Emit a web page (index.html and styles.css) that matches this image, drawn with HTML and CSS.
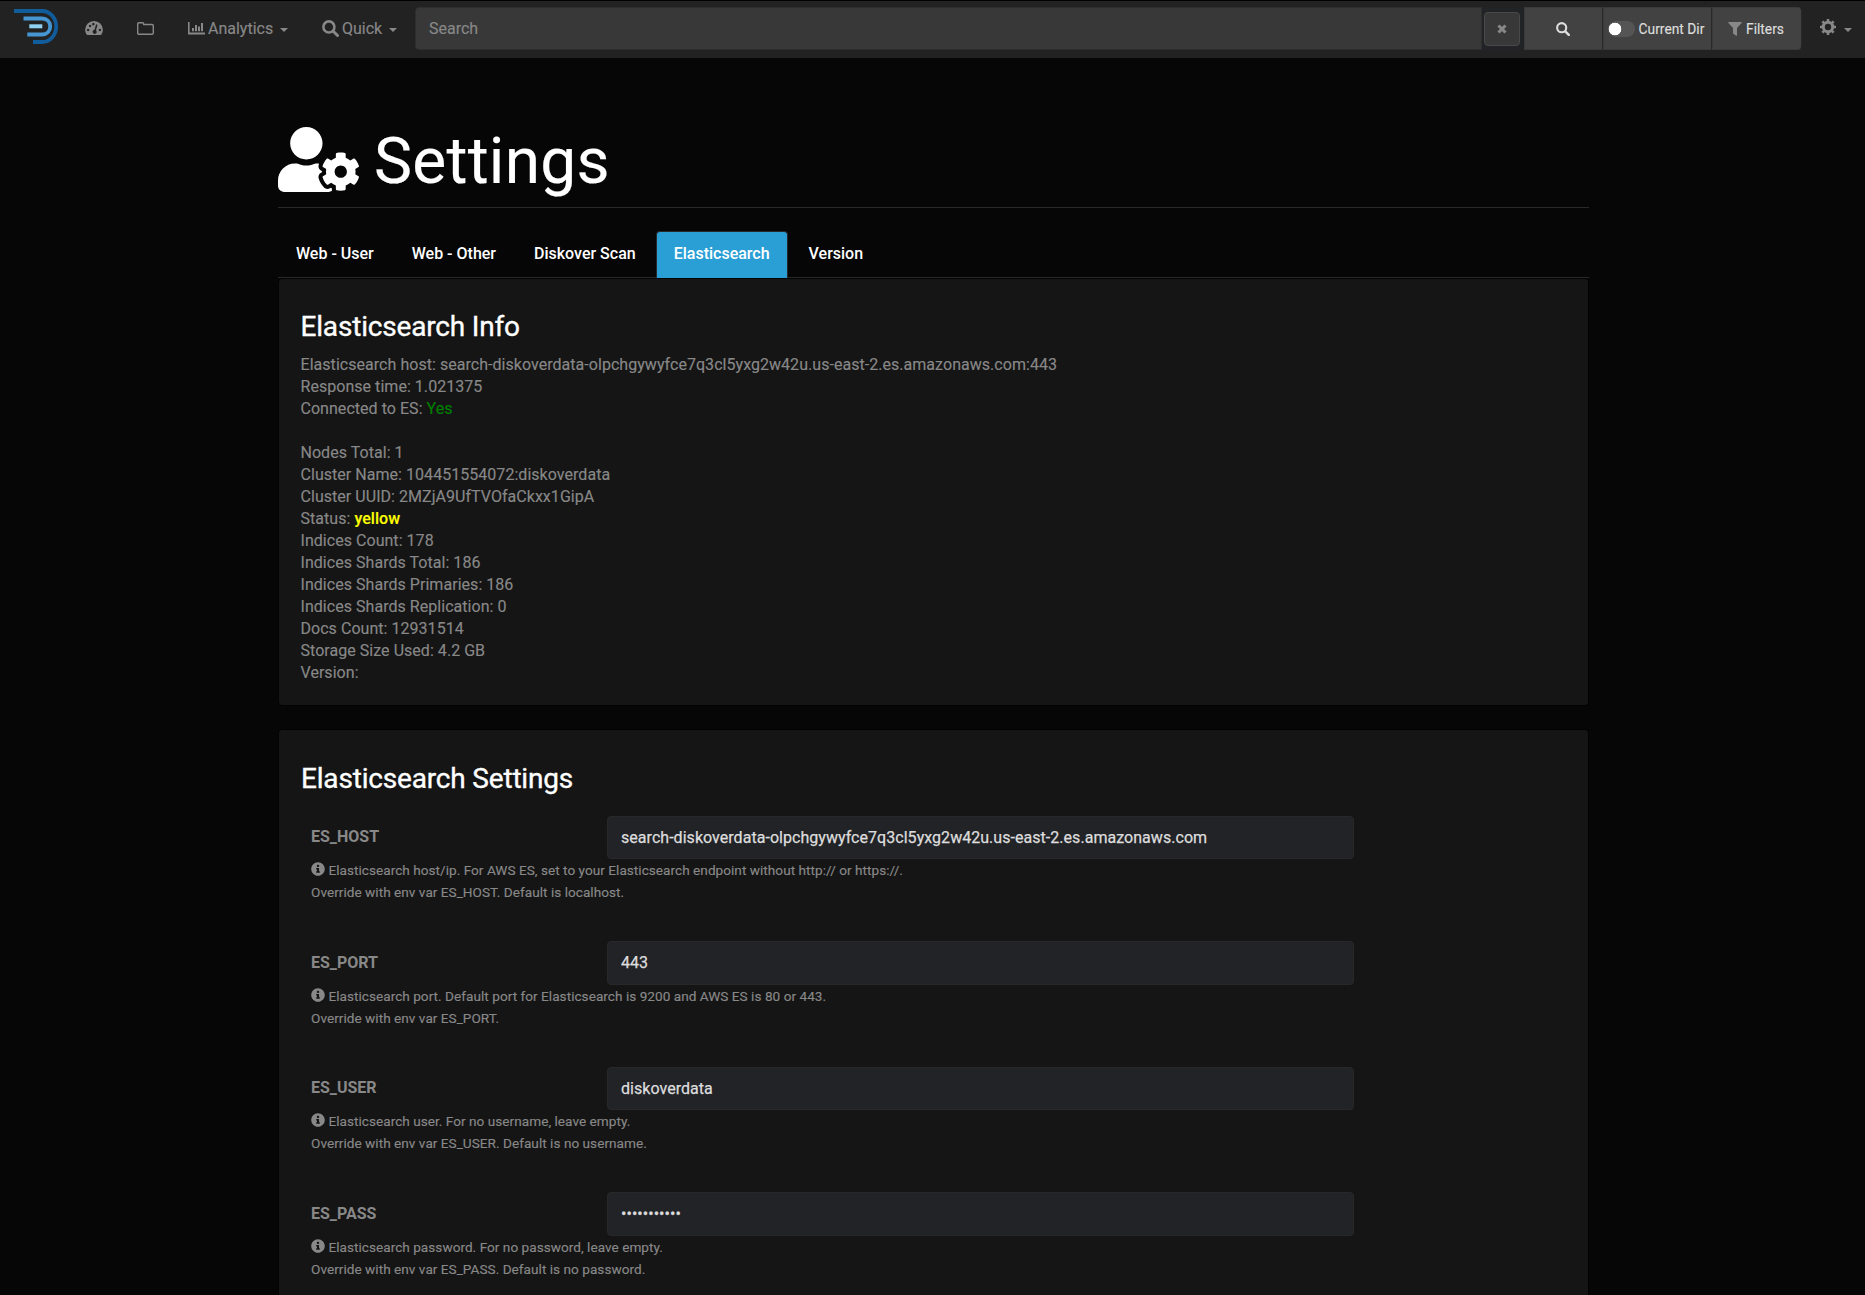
FILE: index.html
```html
<!DOCTYPE html>
<html lang="en">
<head>
<meta charset="utf-8">
<title>Settings</title>
<link rel="stylesheet" href="styles.css">
</head>
<body>
<svg class="defs" aria-hidden="true">
  <symbol id="info" viewBox="0 0 512 512"><path d="M256 8C119 8 8 119 8 256s111 248 248 248 248-111 248-248S393 8 256 8zm0 90c25 0 44 19 44 44s-19 44-44 44-44-19-44-44 19-44 44-44zm66 284c0 7-5 12-12 12H202c-7 0-12-5-12-12v-32c0-7 5-12 12-12h16v-60h-16c-7 0-12-5-12-12v-32c0-7 5-12 12-12h80c7 0 12 5 12 12v104h16c7 0 12 5 12 12z"/></symbol>
  <symbol id="search" viewBox="0 0 16 16"><circle cx="6.5" cy="6.5" r="5.200" fill="none" stroke="currentColor" stroke-width="2.400"/><path d="M10.600 10.600l4 4" stroke="currentColor" stroke-width="2.800" stroke-linecap="round"/></symbol>
</svg>
<nav class="navbar">
  <svg class="logo" viewBox="0 0 46 37" fill="none"><path d="M0 2h28c8 0 14.200 7 14.200 15.500S36 33 28 33h-9" stroke="#115c9b" stroke-width="3.800"/><path d="M9.500 9.500H28c5 0 8.200 3.500 8.200 8s-3.200 8-8.200 8H13.300" stroke="#4596d3" stroke-width="3.800"/><path d="M15.300 17.300h13" stroke="#8fd3f4" stroke-width="4"/></svg>
  <a class="nav-icon dash"><svg width="18" height="14" viewBox="0 0 19 15"><path fill="currentColor" fill-rule="evenodd" d="M1.500 14.500A9 9 0 0 1 0 9.500a9.500 9.500 0 0 1 19 0 9 9 0 0 1-1.500 5q-.3.500-1 .500h-14q-.7 0-1-.500zM3.200 8.300a1.300 1.300 0 1 0 .01 0zM5.300 4a1.300 1.300 0 1 0 .01 0zM15.800 8.300a1.300 1.300 0 1 0 .01 0zM8.800 2a1.300 1.300 0 1 0 .01 0zM11.800 3.500l-1.800 6a2.200 2.200 0 1 0 1.600.5l1.700-5.800z"/></svg></a>
  <a class="nav-icon folder"><svg width="17" height="13" viewBox="0 0 17 13"><path fill="none" stroke="currentColor" stroke-width="1.400" d="M.7 2Q.7.7 2 .7h3.500q1.200 0 1.200 1.300v.5H15q1.300 0 1.300 1.300V11q0 1.300-1.300 1.300H2Q.7 12.300.7 11z"/></svg></a>
  <a class="nav-link analytics"><svg width="17" height="13" viewBox="0 0 17 13"><path fill="currentColor" d="M0 0h1.600v10.600H17v1.800H0zM4 6h2v3.200H4zM7 3h2v6.200H7zM10 4.500h2v4.700h-2zM13 1h2v8.200h-2z"/></svg><span>Analytics</span><i class="caret"></i></a>
  <a class="nav-link quick"><svg width="17" height="17"><use href="#search"/></svg><span>Quick</span><i class="caret"></i></a>
  <div class="searchbar">
    <div class="field">Search</div>
    <div class="clear"><span class="clear-btn"><svg width="10" height="10" viewBox="0 0 10 10"><path d="M1.500 1.500l7 7M8.500 1.500l-7 7" stroke="currentColor" stroke-width="3"/></svg></span></div>
    <div class="cell go"><svg width="14" height="14" viewBox="0 0 16 16"><use href="#search" width="16" height="16"/></svg></div>
    <div class="cell dir"><span class="toggle"></span><span>Current Dir</span></div>
    <div class="cell filters"><svg width="14" height="14" viewBox="0 0 14 14"><path fill="currentColor" d="M.5 0h13q.6.500 0 1.100L9 6v7.300q-.3.900-1.200.2L5 11.500V6L.4 1.100Q0 .5.500 0z"/></svg><span>Filters</span></div>
  </div>
  <a class="nav-link gear"><svg width="16" height="16" viewBox="0 0 16 16" fill="none" stroke="currentColor"><circle cx="8" cy="8" r="4.700" stroke-width="3"/><path stroke-width="2.600" d="M8 0v3.500M8 12.500V16M0 8h3.500M12.500 8H16M2.350 2.350l2.300 2.300M11.350 11.350l2.300 2.300M2.350 13.650l2.300-2.300M11.350 4.650l2.300-2.300"/></svg><i class="caret"></i></a>
</nav>
<main class="container">
  <h1 class="title"><svg width="81" height="65" viewBox="0 0 640 512"><path fill="currentColor" d="M610.5 373.3c2.6-14.1 2.6-28.5 0-42.6l25.8-14.9c3-1.7 4.3-5.2 3.3-8.5-6.7-21.6-18.2-41.2-33.2-57.4-2.3-2.5-6-3.1-9-1.4l-25.8 14.9c-10.9-9.3-23.4-16.5-36.9-21.3v-29.8c0-3.4-2.4-6.4-5.7-7.1-22.3-5-45-4.8-66.2 0-3.3.7-5.7 3.7-5.7 7.1v29.8c-13.5 4.8-26 12-36.9 21.3l-25.8-14.9c-2.9-1.7-6.7-1.1-9 1.4-15 16.2-26.5 35.8-33.2 57.4-1 3.3.4 6.8 3.3 8.5l25.8 14.9c-2.6 14.1-2.6 28.5 0 42.6l-25.8 14.9c-3 1.7-4.3 5.2-3.3 8.5 6.7 21.6 18.2 41.1 33.2 57.4 2.3 2.5 6 3.1 9 1.4l25.8-14.9c10.9 9.3 23.4 16.5 36.9 21.3v29.8c0 3.4 2.4 6.4 5.7 7.1 22.3 5 45 4.8 66.2 0 3.3-.7 5.7-3.7 5.7-7.1v-29.8c13.5-4.8 26-12 36.9-21.3l25.8 14.9c2.9 1.7 6.7 1.1 9-1.4 15-16.2 26.5-35.8 33.2-57.4 1-3.3-.4-6.800-3.300-8.500l-25.800-14.900zM496 400.500c-26.800 0-48.500-21.800-48.500-48.500s21.800-48.500 48.500-48.500 48.500 21.800 48.500 48.500-21.700 48.500-48.500 48.500zM224 256c70.700 0 128-57.300 128-128S294.700 0 224 0 96 57.300 96 128s57.300 128 128 128zm201.200 226.500c-2.300-1.200-4.600-2.600-6.800-3.900l-7.900 4.600c-6 3.400-12.800 5.300-19.600 5.300-10.900 0-21.400-4.600-28.900-12.600-18.300-19.800-32.300-43.900-40.200-69.600-5.500-17.700 1.900-36.400 17.900-45.700l7.900-4.600c-.1-2.600-.1-5.200 0-7.800l-7.900-4.600c-16-9.200-23.400-28-17.900-45.700.9-2.900 2.200-5.800 3.200-8.700-3.800-.3-7.500-1.200-11.400-1.200h-16.700c-22.200 10.200-46.900 16-72.900 16s-50.600-5.800-72.900-16h-16.700C60.200 288 0 348.200 0 422.400V464c0 26.500 21.500 48 48 48h352c10.100 0 19.500-3.200 27.200-8.500-1.200-3.800-2-7.700-2-11.800v-9.200z"/></svg><span>Settings</span></h1>
  <div class="tabs">
    <a class="tab">Web - User</a><a class="tab">Web - Other</a><a class="tab">Diskover Scan</a><a class="tab active">Elasticsearch</a><a class="tab">Version</a>
  </div>
  <section class="well info">
    <h2>Elasticsearch Info</h2>
    <p>Elasticsearch host: search-diskoverdata-olpchgywyfce7q3cl5yxg2w42u.us-east-2.es.amazonaws.com:443<br>Response time: 1.021375<br>Connected to ES: <span class="ok">Yes</span><br><br>Nodes Total: 1<br>Cluster Name: 104451554072:diskoverdata<br>Cluster UUID: 2MZjA9UfTVOfaCkxx1GipA<br>Status: <span class="warn">yellow</span><br>Indices Count: 178<br>Indices Shards Total: 186<br>Indices Shards Primaries: 186<br>Indices Shards Replication: 0<br>Docs Count: 12931514<br>Storage Size Used: 4.2 GB<br>Version:</p>
  </section>
  <section class="well settings">
    <h2>Elasticsearch Settings</h2>
    <div class="row"><label>ES_HOST</label><input class="input" type="text" value="search-diskoverdata-olpchgywyfce7q3cl5yxg2w42u.us-east-2.es.amazonaws.com">
      <p class="help"><svg class="info-icon"><use href="#info"/></svg> Elasticsearch host/ip. For AWS ES, set to your Elasticsearch endpoint without http:// or https://.<br>Override with env var ES_HOST. Default is localhost.</p></div>
    <div class="row"><label>ES_PORT</label><input class="input" type="text" value="443">
      <p class="help"><svg class="info-icon"><use href="#info"/></svg> Elasticsearch port. Default port for Elasticsearch is 9200 and AWS ES is 80 or 443.<br>Override with env var ES_PORT.</p></div>
    <div class="row"><label>ES_USER</label><input class="input" type="text" value="diskoverdata">
      <p class="help"><svg class="info-icon"><use href="#info"/></svg> Elasticsearch user. For no username, leave empty.<br>Override with env var ES_USER. Default is no username.</p></div>
    <div class="row"><label>ES_PASS</label><div class="input password">•••••••••••</div>
      <p class="help"><svg class="info-icon"><use href="#info"/></svg> Elasticsearch password. For no password, leave empty.<br>Override with env var ES_PASS. Default is no password.</p></div>
  </section>
</main>
</body>
</html>
```
FILE: styles.css
```css
* { box-sizing: border-box; }
body { margin: 0; height: 1295px; overflow: hidden; background: #060606; color: #888; font: 16px/22px Roboto, sans-serif; -webkit-text-stroke: .15px currentColor; }
.defs { position: absolute; width: 0; height: 0; }
.navbar { display: flex; height: 58px; border-top: 1px solid #000; background: #222; color: #888; }
.logo { width: 46px; height: 37px; margin: 8px 0 0 14px; flex: none; }
.nav-icon, .nav-link { display: flex; flex: none; }
.nav-icon svg, .nav-link svg { flex: none; }
.dash { width: 52px; padding: 20px 0 0 25px; }
.folder { width: 75px; padding: 21px 0 0 25px; }
.analytics { width: 134px; margin-left: 1px; }
.nav-link span { margin-top: 17px; }
.analytics svg { margin: 21px 3px 0 0; }
.quick svg { margin: 19px 3px 0 0; }
.quick { width: 93px; }
.caret { width: 8px; height: 4px; margin: 27px 0 0 7px; border: 4px solid transparent; border-top-color: currentColor; border-bottom: 0; }
.searchbar { display: flex; width: 1387px; height: 43px; margin-top: 6px; border-radius: 4px; overflow: hidden; flex: none; }
.field { width: 1067px; padding: 10px 13px; background: #383838; border: 1px solid #2e2e2e; border-radius: 4px 0 0 4px; flex: none; }
.clear { width: 42px; padding: 5px 3px 4px 2px; background: #222326; flex: none; }
.clear-btn { display: flex; height: 34px; width: 36px; align-items: center; justify-content: center; border: 1px solid #484848; border-radius: 4px; background: #383838; }
.cell { display: flex; align-items: center; justify-content: center; background: #424242; color: #ddd; font-size: 13.8px; border: 1px solid #3a3a3a; border-right: 1px solid #282828; }
.go { width: 79px; padding-right: 2px; }
.dir { width: 109px; gap: 4px; padding-right: 3px; }
.toggle { width: 27px; height: 16px; border-radius: 8px; background: radial-gradient(circle at 7px 8px, #fff 6px, #555 6.6px); }
.filters { flex: 1; gap: 4px; padding-right: 2px; border-radius: 0 4px 4px 0; }
.filters svg { color: #888; }
.gear { padding-left: 18px; }
.gear svg { margin-top: 18px; }
.gear .caret { margin-left: 8px; }
.container { width: 1311px; margin-left: 278px; }
.title { display: flex; height: 150px; margin: 0; padding-top: 69px; border-bottom: 1px solid #282828; color: #fff; font-size: 64px; font-weight: 400; line-height: 70px; letter-spacing: .25px; }
.title span { margin-left: 15px; }
.tabs { display: flex; gap: 2px; height: 70px; padding-top: 23px; border-bottom: 1px solid #282828; }
.tab { height: 47px; padding: 11px 17px; border: 1px solid transparent; border-radius: 4px 4px 0 0; color: #fff; font-weight: 500; -webkit-text-stroke: 0; }
.tab:last-child { margin-left: 1px; }
.tab.active { background: #2a9fd6; border: 1px solid #282828; border-bottom: 0; }
.well { margin: 0 0 23px; padding: 19px 21.500px; border: 1px solid #020202; border-radius: 4px; background: #151515; }
.info { height: 428px; padding-top: 32px; }
h2 { margin: 0; color: #fff; font-size: 28px; line-height: 31px; font-weight: 400; letter-spacing: -.18px; -webkit-text-stroke: .35px currentColor; }
.well p { margin: 0; }
.info p { margin-top: 12px; letter-spacing: .04px; }
.ok { color: #008000; }
.warn { color: #ff0; font-weight: 500; }
.settings { height: 566px; margin: 0; padding: 33px 22px 0; overflow: hidden; border-bottom: 0; border-radius: 4px 4px 0 0; }
.row { display: grid; grid-template-columns: 296px 747px; height: 125.5px; padding-left: 10px; align-content: start; }
h2 + .row { margin-top: 21.500px; }
label { padding-top: 10.500px; font-weight: 700; -webkit-text-stroke: 0; }
.input { height: 43.500px; padding: 0 13px; border: 1px solid #282828; border-radius: 4px; background: #222327; color: #ddd; font: 16px/41px Roboto, sans-serif; letter-spacing: .04px; -webkit-text-stroke: .25px currentColor; }
.help { grid-column: 1 / 3; font-size: 13.6px; line-height: 22px; letter-spacing: .03px; }
.info-icon { width: 14px; height: 14px; fill: currentColor; vertical-align: -1px; }
.password { font-size: 16px; }
```
